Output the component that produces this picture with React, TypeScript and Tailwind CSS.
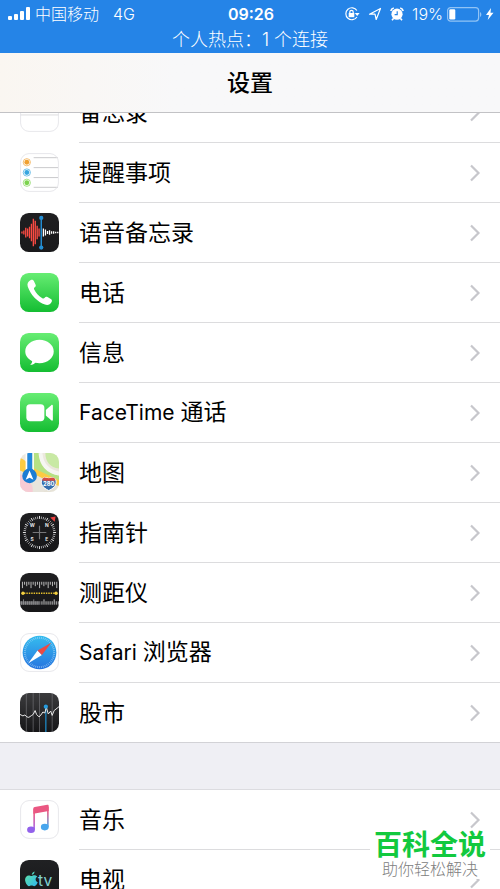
import type { ReactNode } from "react";

const range = (n: number) => Array.from({ length: n }, (_, i) => i);

function Tile({ id, from, to, border, children }: { id: string; from: string; to: string; border?: boolean; children?: ReactNode }) {
  return (
    <svg viewBox="0 0 40 40" className="mt-2.5 size-[39px] shrink-0" aria-hidden="true">
      <defs>
        <linearGradient id={`${id}-bg`} x1="0" y1="0" x2="0" y2="1">
          <stop offset="0" stopColor={from} />
          <stop offset="1" stopColor={to} />
        </linearGradient>
        <clipPath id={`${id}-clip`}>
          <rect width="40" height="40" rx="9" />
        </clipPath>
      </defs>
      <g clipPath={`url(#${id}-clip)`}>
        <rect width="40" height="40" fill={`url(#${id}-bg)`} />
        {children}
      </g>
      {border && <rect x="0.6" y="0.6" width="38.8" height="38.8" rx="8.7" fill="none" stroke="#e4e4e8" strokeWidth="0.9" />}
    </svg>
  );
}

function NotesIcon() {
  return (
    <Tile id="notes" from="#ffffff" to="#ffffff" border>
      <rect width="40" height="11" fill="#fccb2e" />
      <path d="M0 22.500h40" stroke="#d4d4d6" strokeWidth="0.8" />
    </Tile>
  );
}

function RemindersIcon() {
  return (
    <Tile id="reminders" from="#ffffff" to="#ffffff" border>
      <path d="M14 4.800h25M14 15h25M14 25.200h25M14 35.200h25" stroke="#c9c9cb" strokeWidth="1" />
      {[["#f0a030", 9.5], ["#35a5df", 20], ["#7cd34e", 30.5]].map(([c, y]) => (
        <g key={y}>
          <circle cx="7" cy={y} r="3.7" fill="#ffffff" stroke={String(c)} strokeWidth="0.7" />
          <circle cx="7" cy={y} r="2.5" fill={String(c)} />
        </g>
      ))}
    </Tile>
  );
}

function VoiceIcon() {
  const red = [1, 2, 5, 4, 6, 9, 14, 12, 7, 4];
  const white = [4, 3, 1.5, 2.2, 1.2, 1.2, 0.8, 0.8];
  return (
    <Tile id="voice" from="#1f1f21" to="#19191b">
      {red.map((h, i) => (
        <path key={i} d={`M${2 + i * 1.95} ${20 - h}v${h * 2}`} stroke="#fb4b43" strokeWidth="1.4" />
      ))}
      {white.map((h, i) => (
        <path key={i} d={`M${24 + i * 2.1} ${20 - h}v${h * 2}`} stroke="#ffffff" strokeWidth="1.300" />
      ))}
      <path d="M21.800 5v30" stroke="#238fd5" strokeWidth="1.500" />
      <circle cx="21.800" cy="5" r="2.200" fill="#238fd5" />
      <circle cx="21.800" cy="35.500" r="2.200" fill="#238fd5" />
    </Tile>
  );
}

function PhoneIcon() {
  return (
    <Tile id="phone" from="#67ed73" to="#14bd32">
      <path
        d="M11 7.300c1.300-.7 2.500-.2 3.200 1l1.700 3.400c.6 1.300.3 2.100-.8 2.900-.9.700-1 1.300-.4 2.500 1.800 3.400 4.600 6.500 8.200 8.700 1 .6 1.700.4 2.400-.5.800-1 1.700-1.200 2.900-.6l3.400 1.900c1.200.7 1.500 1.800.8 3.100-1.400 2.600-4 3.700-6.800 2.600C18.200 29.800 11 22.700 8 14c-1-2.800.3-5.300 3-6.700z"
        fill="#ffffff"
      />
    </Tile>
  );
}

function MessagesIcon() {
  return (
    <Tile id="messages" from="#67ed73" to="#14bd32">
      <path d="M20 7c8.200 0 14.600 5.300 14.600 12S28.200 31 20 31c-1.500 0-2.900-.2-4.200-.5-1.200 1.400-3.200 2.200-5.400 2.100 1.300-.9 2-2.300 2.100-3.700C8.200 26.700 5.400 23.100 5.400 19 5.400 12.300 11.800 7 20 7z" fill="#ffffff" />
    </Tile>
  );
}

function FaceTimeIcon() {
  return (
    <Tile id="facetime" from="#67ed73" to="#14bd32">
      <rect x="6.500" y="11.500" width="18.500" height="17.500" rx="3.800" fill="#ffffff" />
      <path d="M26.500 17.500l5.500-5c.9-.8 1.700-.4 1.700.6v14.300c0 1-.8 1.400-1.700.6l-5.500-5z" fill="#ffffff" />
    </Tile>
  );
}

function MapsIcon() {
  return (
    <Tile id="maps" from="#ede9df" to="#e6e2d7">
      <path d="M0 5c3 1 5 2 7 5v11L0 18z" fill="#fccb42" />
      <path d="M0 22c5 0 11 6 15 18H0z" fill="#f7cbd4" />
      <path d="M13 0h8c0 13 8 21 19 23v8L13 17z" fill="#b5e184" />
      <path d="M26 0h14v16C31 15 26 9 26 0z" fill="#c8e9a4" />
      <path d="M21 0c1 12 8 19 19 21" fill="none" stroke="#f6f6f2" strokeWidth="4" />
      <path d="M13 15l27 13v6L13 21z" fill="#fccb42" />
      <path d="M13 21l20 11-9 8H13z" fill="#e8e5dc" />
      <path d="M6.500 0v22M13.500 0v22" stroke="#ffffff" strokeWidth="1.500" />
      <path d="M10 0v23" stroke="#2388dc" strokeWidth="5" />
      <circle cx="9.800" cy="23.500" r="7.500" fill="#1b7dd3" />
      <path d="M9.800 18l4 9.500-4-2-4 2z" fill="#ffffff" />
      <path d="M22.500 27l2.500-2 4.500 1 4.500-1 2.500 2c1.500 4 .5 8-7 11.500-7.500-3.500-8.500-7.500-7-11.500z" fill="#356fae" stroke="#ffffff" strokeWidth="1" />
      <path d="M23 26.500l2-1.500 4.500 1 4.500-1 2 1.500v2H23z" fill="#d64c43" />
      <text x="29.500" y="34" textAnchor="middle" fontSize="6" fontWeight="700" fill="#ffffff" className="font-['Inter',sans-serif]">280</text>
    </Tile>
  );
}

function CompassIcon() {
  return (
    <Tile id="compass" from="#1f1f21" to="#161618">
      {range(48).map((i) => (
        <path key={i} d={i % 4 === 0 ? "M20 3v3" : "M20 3.500v2.500"} stroke={i % 4 === 0 ? "#ffffff" : "#a8a8aa"} strokeWidth="0.9" transform={`rotate(${i * 7.5} 20 20)`} />
      ))}
      <path d="M20 13v14M13 20h14" stroke="#77777a" strokeWidth="1.200" />
      <path d="M36.500 3.500l-1 5.500-4.500-4.500z" fill="#ee4141" />
      <g fontSize="5" fontWeight="700" fill="#e8e8e8" textAnchor="middle" className="font-['Inter',sans-serif]">
        <text x="12.500" y="14.500">W</text>
        <text x="27.500" y="14.500">N</text>
        <text x="12.500" y="29">S</text>
        <text x="27.500" y="29">E</text>
      </g>
    </Tile>
  );
}

function MeasureIcon() {
  return (
    <Tile id="measure" from="#1f1f21" to="#161618">
      {range(17).map((i) => (
        <path key={i} d={`M${2.500 + i * 2.200} 9v${i % 4 === 0 ? 6.5 : i % 2 === 0 ? 4.5 : 3}`} stroke="#e8e8e8" strokeWidth="0.8" />
      ))}
      <path d="M4 20.800h33" stroke="#e6c02d" strokeWidth="1.600" strokeDasharray="1.500 1" />
      <circle cx="3" cy="20.800" r="1.700" fill="#f4d042" />
      <circle cx="37" cy="20.800" r="1.700" fill="#f4d042" />
      <path d="M0 29h20v3.500H0z" fill="#626265" />
      {range(19).map((i) => (
        <path key={i} d={`M${1.500 + i * 2.100} 32.500v-${i % 5 === 1 ? 5.500 : 3.500}`} stroke={i < 10 ? "#98989b" : "#eeeeee"} strokeWidth="0.8" />
      ))}
    </Tile>
  );
}

function SafariIcon() {
  return (
    <Tile id="safari" from="#ffffff" to="#ffffff" border>
      <defs>
        <linearGradient id="safari-dial" x1="0" y1="0" x2="0" y2="1">
          <stop offset="0" stopColor="#35bdef" />
          <stop offset="1" stopColor="#2774df" />
        </linearGradient>
      </defs>
      <circle cx="20" cy="20" r="17.300" fill="url(#safari-dial)" />
      {range(48).map((i) => (
        <path key={i} d="M20 4v2" stroke="#b8e0fb" strokeWidth="0.5" transform={`rotate(${i * 7.5} 20 20)`} />
      ))}
      <path d="M8.500 31L18 18l4.500 4.500z" fill="#ffffff" />
      <path d="M32 10L18 18l4.500 4.500z" fill="#ed4a45" />
    </Tile>
  );
}

function StocksIcon() {
  return (
    <Tile id="stocks" from="#3b3b3d" to="#151517">
      <path d="M6.500 0v40M13.500 0v40M20 0v40M33 0v40" stroke="#707074" strokeWidth="0.7" />
      <path d="M26.500 14v26" stroke="#1e8ac6" strokeWidth="1.300" />
      <path d="M0 22l3 1.500 2-1 2 2 2 .5 3-2 1.500-1 2-4 1.500 4 2.500 2.500 2-2 2-3 2 1 1.500-6 2 7 2.500-3 1.500 4.500 2-5L40 14" fill="none" stroke="#eeeeee" strokeWidth="1" strokeLinejoin="round" />
      <circle cx="26.500" cy="14" r="2.200" fill="#269bdd" />
    </Tile>
  );
}

function MusicIcon() {
  return (
    <Tile id="music" from="#ffffff" to="#ffffff" border>
      <defs>
        <linearGradient id="music-left" x1="0" y1="6" x2="0" y2="34" gradientUnits="userSpaceOnUse">
          <stop offset="0.300" stopColor="#eb5581" />
          <stop offset="0.850" stopColor="#a360e8" />
        </linearGradient>
        <linearGradient id="music-right" x1="0" y1="6" x2="0" y2="31" gradientUnits="userSpaceOnUse">
          <stop offset="0.250" stopColor="#e75885" />
          <stop offset="0.900" stopColor="#41abed" />
        </linearGradient>
      </defs>
      <path d="M13.700 9h1.600v21.500h-1.600z" fill="url(#music-left)" />
      <path d="M27.800 7h1.600v21h-1.600z" fill="url(#music-right)" />
      <path d="M13.700 8.800c0-1 .5-1.400 1.400-1.600l12.900-2.400c.9-.2 1.400.3 1.400 1.200v5.200l-15.700 3z" fill="#ea5782" />
      <ellipse cx="11.300" cy="30.500" rx="4" ry="3.400" fill="#9261eb" />
      <ellipse cx="25.400" cy="27.800" rx="4" ry="3.400" fill="#47a5ed" />
    </Tile>
  );
}

function TvIcon() {
  return (
    <Tile id="tv" from="#202123" to="#171719">
      <defs>
        <linearGradient id="tv-tint" x1="0" y1="0" x2="1" y2="1">
          <stop offset="0" stopColor="#62e5a2" />
          <stop offset="1" stopColor="#2fb5ee" />
        </linearGradient>
      </defs>
      <path d="M12 15.200c.2-1.700 1.300-3 2.900-3.400.1 1.900-1.200 3.300-2.900 3.400zm-.1 1.200c1 0 1.800-.7 3-.7 1 0 2.100.5 2.800 1.600-2.500 1.400-2 4.700.5 5.600-.8 2-2.100 4-3.600 4-1.100 0-1.500-.7-2.700-.7s-1.700.7-2.700.7c-1.700 0-4-4-4-6.600 0-2.700 1.800-4.500 3.800-4.500 1.200 0 2 .6 2.900.6z" fill="url(#tv-tint)" />
      <text x="18.500" y="26.500" fontSize="16" fill="#81d1d1" className="font-['Inter',sans-serif]">tv</text>
    </Tile>
  );
}

function Chevron() {
  return (
    <svg viewBox="0 0 12 18" className="h-[18px] w-3 shrink-0" fill="none" stroke="#c7c7cc" strokeWidth="2.200" aria-hidden="true">
      <path d="M2 1.500L9.500 9 2 16.500" />
    </svg>
  );
}

type Item = { latin?: string; label: string; icon: ReactNode };

const apps: Item[] = [
  { label: "备忘录", icon: <NotesIcon /> },
  { label: "提醒事项", icon: <RemindersIcon /> },
  { label: "语音备忘录", icon: <VoiceIcon /> },
  { label: "电话", icon: <PhoneIcon /> },
  { label: "信息", icon: <MessagesIcon /> },
  { latin: "FaceTime", label: "通话", icon: <FaceTimeIcon /> },
  { label: "地图", icon: <MapsIcon /> },
  { label: "指南针", icon: <CompassIcon /> },
  { label: "测距仪", icon: <MeasureIcon /> },
  { latin: "Safari", label: "浏览器", icon: <SafariIcon /> },
  { label: "股市", icon: <StocksIcon /> },
];

const media: Item[] = [
  { label: "音乐", icon: <MusicIcon /> },
  { label: "电视", icon: <TvIcon /> },
];

function Group({ items }: { items: Item[] }) {
  return (
    <ul className="bg-white">
      {items.map(({ latin, label, icon }, i) => (
        <li key={label} className={i === items.length - 1 ? "border-b border-[#d2d2d6]" : ""}>
          <button type="button" className="flex w-full items-start gap-5 pl-5 text-left">
            {icon}
            <span className={`flex min-w-0 flex-1 items-center justify-between pr-[19px] ${i === items.length - 1 ? "h-[59px]" : "h-[60px] border-b border-[#dcdcde]"}`}>
              <span className="text-[23px] leading-8">
                {latin && <span className="text-[21px]">{latin} </span>}
                {label}
              </span>
              <Chevron />
            </span>
          </button>
        </li>
      ))}
    </ul>
  );
}

function StatusBar() {
  return (
    <div className="h-[53px] shrink-0 bg-[#2584e7] text-white">
      <div className="grid h-7 grid-cols-[1fr_auto_1fr] items-center pr-1.5 pl-2">
        <div className="flex items-center gap-1">
          <svg viewBox="0 0 23 14" className="h-3.5 w-[23px]" fill="currentColor" aria-hidden="true">
            <rect x="0" y="9" width="4" height="4" rx="1" />
            <rect x="6" y="7" width="4" height="6" rx="1" />
            <rect x="12" y="4" width="4" height="9" rx="1" />
            <rect x="18" y="0" width="4" height="13" rx="1" />
          </svg>
          <span className="text-base leading-5 font-light">中国移动</span>
          <span className="pl-2.5 text-base leading-5 font-light">4G</span>
        </div>
        <span className="text-base leading-5 font-semibold">09:26</span>
        <div className="flex items-center justify-end">
          <svg viewBox="0 0 16 16" className="mr-2 size-4" fill="none" stroke="currentColor" strokeWidth="1.200" aria-hidden="true">
            <path d="M12.900 4.500A6 6 0 1 0 12.900 11" />
            <path d="M10.800 7h4.800l-2.400 3z" fill="currentColor" stroke="none" />
            <rect x="4.700" y="7" width="5.600" height="4.200" fill="currentColor" stroke="none" />
            <path d="M5.800 7.500V6a1.700 1.700 0 0 1 3.400 0v1.500" />
          </svg>
          <svg viewBox="0 0 14 14" className="mr-2 size-3.5" fill="none" stroke="currentColor" strokeWidth="1.200" strokeLinejoin="round" aria-hidden="true">
            <path d="M1.500 7.200L12.500 1.500 8.200 12.500 7 7.200z" />
          </svg>
          <svg viewBox="0 0 14 14" className="mr-2 size-3.5" aria-hidden="true">
            <circle cx="7" cy="7.200" r="5.600" fill="currentColor" />
            <path d="M.800 4a4 4 0 0 1 3-3M10.200 1a4 4 0 0 1 3 3M3.500 11.500L2 13.300M10.500 11.500l1.500 1.800" stroke="currentColor" strokeWidth="1.600" fill="none" />
            <path d="M7.200 4.200v3.500H4.600" stroke="#2584e7" strokeWidth="1.200" fill="none" />
          </svg>
          <span className="mr-1 text-base leading-5 font-light">19%</span>
          <svg viewBox="0 0 36 15" className="mr-0.5 h-[15px] w-9" aria-hidden="true">
            <rect x="0.600" y="0.600" width="31" height="13.500" rx="3" fill="none" stroke="#91c3f5" strokeWidth="1.200" />
            <rect x="2.300" y="2.200" width="6" height="10.300" rx="1.200" fill="currentColor" />
            <path d="M33 5v5c1.800-.8 1.800-4.200 0-5z" fill="#91c3f5" />
          </svg>
          <svg viewBox="0 0 9 12" className="h-3 w-[9px]" fill="currentColor" aria-hidden="true">
            <path d="M6 0L1 7h3L2.700 12 8.500 4.800h-3z" />
          </svg>
        </div>
      </div>
      <p className="text-center text-[18px] leading-6 font-light">个人热点：1 个连接</p>
    </div>
  );
}

export default function App() {
  return (
    <main className="relative flex h-screen flex-col overflow-hidden bg-[#efeff4] font-['Inter','Noto_Sans_CJK_SC',sans-serif] text-black">
      <StatusBar />
      <header className="flex h-[60px] shrink-0 items-center justify-center border-b border-[#c2c2c5] bg-linear-to-r from-[#faf6f1] via-[#f8f8f9] via-35% to-[#f8f8f9]">
        <h1 className="text-[23px] leading-8 font-medium">设置</h1>
      </header>
      <div className="flex min-h-0 flex-1 flex-col justify-start overflow-hidden">
        <div className="-mt-[30px] flex flex-col gap-[46px]">
          <Group items={apps} />
          <div className="border-t border-[#dcdce0]">
            <Group items={media} />
          </div>
        </div>
      </div>
      <aside className="absolute right-2.5 bottom-2.5 w-[120px] bg-white text-center">
        <p className="text-[28px] leading-7 font-bold text-[#12c93e]">百科全说</p>
        <p className="text-base leading-5 font-light text-[#808080]">助你轻松解决</p>
      </aside>
    </main>
  );
}
